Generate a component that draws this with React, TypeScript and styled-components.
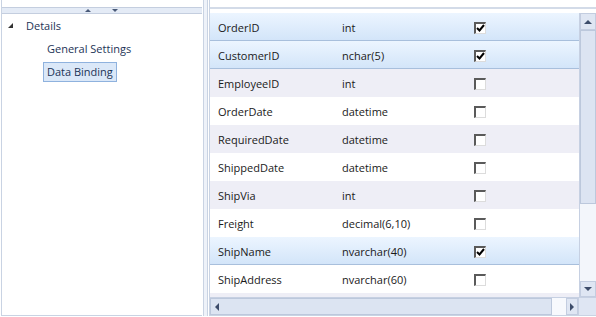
import styled, {createGlobalStyle} from "styled-components";

const GlobalStyle = createGlobalStyle`
  html, body {
    margin: 0;
    padding: 0;
    background: #fff;
  }
  body {
    font-family: "Open Sans", "Noto Sans", "DejaVu Sans", sans-serif;
    font-size: 11px;
  }
`;

const Frame = styled.div`
  width: 596px;
  height: 317px;
  display: flex;
  background: #fff;
  box-sizing: border-box;
  overflow: hidden;
`;

const LeftPane = styled.div`
  width: 201px;
  height: 316px;
  display: flex;
  flex-direction: column;
  box-sizing: border-box;
  border-left: 1px solid #c9d3e3;
  border-bottom: 1px solid #c9d3e3;
  margin-left: 1px;
`;

const TopGap = styled.div`
  height: 7px;
  flex-shrink: 0;
`;

const PagerBar = styled.div`
  height: 5px;
  flex-shrink: 0;
  display: flex;
  align-items: center;
  justify-content: center;
  gap: 21px;
  padding-right: 2px;
  background: #e4ebf6;
  border-top: 1px solid #c4cedf;
  border-bottom: 1px solid #c4cedf;
`;

const Arrow = styled.span<{$dir: "up" | "down"}>`
  width: 0;
  height: 0;
  border-left: 3px solid transparent;
  border-right: 3px solid transparent;
  ${(p) =>
    p.$dir === "up"
      ? "border-bottom: 3px solid #4a5a78;"
      : "border-top: 3px solid #4a5a78;"}
`;

const Tree = styled.div`
  display: flex;
  flex-direction: column;
  padding: 0 0 0 5px;
  color: #1c3356;
`;

const TreeRow = styled.div<{$indent: number}>`
  display: flex;
  align-items: center;
  height: 23px;
  padding-left: ${(p) => p.$indent}px;
  gap: 9px;
`;

const Expander = styled.span`
  width: 0;
  height: 0;
  border-left: 5px solid transparent;
  border-bottom: 5px solid #333;
`;

const Node = styled.span<{$selected?: boolean}>`
  padding: 0 3px 1px;
  line-height: 17px;
  border: 1px solid ${(p) => (p.$selected ? "#8fb2de" : "transparent")};
  background: ${(p) => (p.$selected ? "#dbe8f8" : "transparent")};
`;

const Splitter = styled.div`
  width: 3px;
  margin-left: 1px;
  height: 316px;
  border-left: 1px solid #c9d3e3;
  border-right: 1px solid #c9d3e3;
  background: #eef2f9;
`;

const RightPane = styled.div`
  flex: 1;
  height: 316px;
  display: flex;
  flex-direction: column;
  margin-left: 1px;
  border-left: 1px solid #c9d3e3;
  border-bottom: 1px solid #c9d3e3;
  box-sizing: border-box;
`;

const RightTop = styled.div`
  height: 7px;
  flex-shrink: 0;
  border-bottom: 2px solid #d3dbe8;
  margin-bottom: 4px;
`;

const Body = styled.div`
  flex: 1;
  display: flex;
  min-height: 0;
`;

const Rows = styled.div`
  flex: 1;
  display: flex;
  flex-direction: column;
  background: #eeeef6;
  overflow: hidden;
`;

const Row = styled.div<{$kind: "sel" | "alt" | "plain"}>`
  height: 28px;
  flex-shrink: 0;
  box-sizing: border-box;
  display: grid;
  grid-template-columns: 124px 132px 1fr;
  align-items: center;
  padding: 2px 0 0 8px;
  color: #1a1a1a;
  background: ${(p) =>
    p.$kind === "sel"
      ? "linear-gradient(#ecf5ff, #d3e5f9)"
      : p.$kind === "alt"
      ? "#eeeef6"
      : "#ffffff"};
  border-bottom: 1px solid
    ${(p) => (p.$kind === "sel" ? "#a8bfdc" : "transparent")};
`;

const Check = styled.span`
  width: 9px;
  height: 9px;
  background: #fff;
  border-top: 2px solid #5a5a5a;
  border-left: 2px solid #5a5a5a;
  border-right: 1px solid #dcdcdc;
  border-bottom: 1px solid #dcdcdc;
  display: flex;
  align-items: center;
  justify-content: center;
`;

const VScroll = styled.div`
  width: 16px;
  display: flex;
  flex-direction: column;
  background: #f3f6fb;
  border-left: 1px solid #c6d0e2;
`;

const ScrollButton = styled.div<{$w?: number; $h?: number}>`
  width: ${(p) => (p.$w ? `${p.$w}px` : "auto")};
  height: ${(p) => (p.$h ? `${p.$h}px` : "auto")};
  flex-shrink: 0;
  display: flex;
  align-items: center;
  justify-content: center;
  background: #dfe6f3;
  border: 1px solid #c3cde0;
  box-sizing: border-box;
`;

const VThumb = styled.div`
  height: 174px;
  flex-shrink: 0;
  background: #dce4f2;
  border: 1px solid #bcc8dc;
  box-sizing: border-box;
`;

const Track = styled.div`
  flex: 1;
`;

const HScroll = styled.div`
  height: 17px;
  flex-shrink: 0;
  display: flex;
  background: #f3f6fb;
  border-top: 1px solid #c6d0e2;
`;

const HThumb = styled.div`
  flex: 1;
  display: flex;
  align-items: center;
  padding-left: 4px;
  background: #dce4f2;
  border: 1px solid #bcc8dc;
  box-sizing: border-box;
`;

const HGap = styled.div`
  width: 14px;
  background: #f7f9fd;
`;

const Corner = styled.div`
  width: 17px;
  background: #dfe6f3;
  border-left: 1px solid #c6d0e2;
`;

const SideArrow = styled.span<{$dir: "left" | "right"}>`
  width: 0;
  height: 0;
  border-top: 4px solid transparent;
  border-bottom: 4px solid transparent;
  ${(p) =>
    p.$dir === "left"
      ? "border-right: 4px solid #3d4c6a;"
      : "border-left: 4px solid #3d4c6a;"}
`;

const VArrow = styled.span<{$dir: "up" | "down"}>`
  width: 0;
  height: 0;
  border-left: 4px solid transparent;
  border-right: 4px solid transparent;
  ${(p) =>
    p.$dir === "up"
      ? "border-bottom: 4px solid #3d4c6a;"
      : "border-top: 4px solid #3d4c6a;"}
`;

const fields: [string, string, boolean][] = [
  ["OrderID", "int", true],
  ["CustomerID", "nchar(5)", true],
  ["EmployeeID", "int", false],
  ["OrderDate", "datetime", false],
  ["RequiredDate", "datetime", false],
  ["ShippedDate", "datetime", false],
  ["ShipVia", "int", false],
  ["Freight", "decimal(6,10)", false],
  ["ShipName", "nvarchar(40)", true],
  ["ShipAddress", "nvarchar(60)", false],
];

const Tick = () => (
  <svg width="9" height="9" viewBox="0 0 9 9">
    <path d="M1 4 L3.5 6.5 L8 1" stroke="#000" strokeWidth="2" fill="none" />
  </svg>
);

const App = () => {
  return (
    <>
      <GlobalStyle />
      <Frame>
        <LeftPane>
          <TopGap />
          <PagerBar>
            <Arrow $dir="up" />
            <Arrow $dir="down" />
          </PagerBar>
          <Tree>
            <TreeRow $indent={1}>
              <Expander />
              <Node>Details</Node>
            </TreeRow>
            <TreeRow $indent={36}>
              <Node>General Settings</Node>
            </TreeRow>
            <TreeRow $indent={36}>
              <Node $selected>Data Binding</Node>
            </TreeRow>
          </Tree>
        </LeftPane>
        <Splitter />
        <RightPane>
          <RightTop />
          <Body>
            <Rows>
              {fields.map(([name, type, checked], i) => (
                <Row
                  key={name}
                  $kind={checked ? "sel" : i % 2 === 0 ? "alt" : "plain"}
                >
                  <span>{name}</span>
                  <span>{type}</span>
                  <Check>{checked && <Tick />}</Check>
                </Row>
              ))}
            </Rows>
            <VScroll>
              <ScrollButton $h={17}>
                <VArrow $dir="up" />
              </ScrollButton>
              <VThumb />
              <Track />
              <ScrollButton $h={16}>
                <VArrow $dir="down" />
              </ScrollButton>
            </VScroll>
          </Body>
          <HScroll>
            <HThumb>
              <SideArrow $dir="left" />
            </HThumb>
            <HGap />
            <ScrollButton $w={12}>
              <SideArrow $dir="right" />
            </ScrollButton>
            <Corner />
          </HScroll>
        </RightPane>
      </Frame>
    </>
  );
};

export default App;
